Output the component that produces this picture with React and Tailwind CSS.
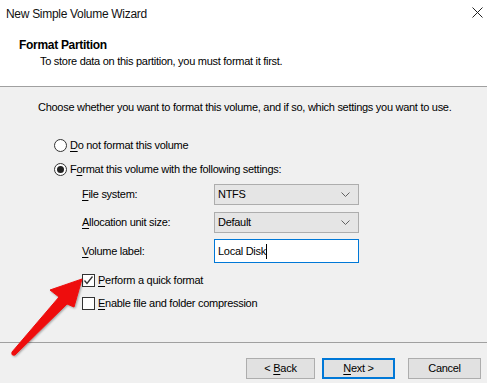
import React from "react";

const U = ({ children }) => <span className="underline underline-offset-2">{children}</span>;

function Chevron() {
  return (
    <svg width="9" height="5" viewBox="0 0 9 5" className="block">
      <path d="M0.5 0.5 L4.5 4.5 L8.5 0.5" fill="none" stroke="#606060" strokeWidth="1" />
    </svg>
  );
}

function Combo({ value }) {
  return (
    <div className="w-[145px] h-[21px] bg-[#e5e5e5] border border-[#adadad] flex items-center justify-between pl-[3px] pr-[8px] box-border">
      <span>{value}</span>
      <Chevron />
    </div>
  );
}

export default function App() {
  return (
    <div
      className="relative w-[487px] h-[383px] bg-[#f0f0f0] overflow-hidden text-[11px] tracking-[-0.28px] text-black flex flex-col"
      style={{ fontFamily: '"Liberation Sans", Arial, sans-serif' }}
    >
      {/* header */}
      <div className="h-[87px] bg-white border-b border-[#a0a0a0] box-border flex flex-col shrink-0">
        <div className="h-[27px] flex items-center justify-between pl-[6px] pr-[4px]">
          <span className="text-[12px] tracking-[-0.3px] leading-none text-[#111]">New Simple Volume Wizard</span>
          <svg width="11" height="11" viewBox="0 0 11 11" className="mt-[-2px]">
            <path d="M0.5 0.5 L10.5 10.5 M10.5 0.5 L0.5 10.5" stroke="#222" strokeWidth="1" />
          </svg>
        </div>
        <div className="pl-[19px] mt-[10px] font-bold text-[12px] tracking-[-0.3px] leading-[16px]">Format Partition</div>
        <div className="pl-[40px] leading-[16px]">To store data on this partition, you must format it first.</div>
      </div>

      {/* body */}
      <div className="flex-1 flex flex-col pl-[38px]">
        <div className="mt-[12px] leading-[16px] whitespace-nowrap">
          Choose whether you want to format this volume, and if so, which settings you want to use.
        </div>

        <div className="mt-[22px] pl-[16px] flex items-center h-[16px] gap-[3px]">
          <span className="w-[13px] h-[13px] rounded-full border border-[#333] bg-white box-border" />
          <span><U>D</U>o not format this volume</span>
        </div>
        <div className="mt-[8px] pl-[16px] flex items-center h-[16px] gap-[3px]">
          <span className="w-[13px] h-[13px] rounded-full border border-[#333] bg-white box-border flex items-center justify-center">
            <span className="w-[7px] h-[7px] rounded-full bg-[#222]" />
          </span>
          <span>F<U>o</U>rmat this volume with the following settings:</span>
        </div>

        <div className="mt-[7px] pl-[44px] flex flex-col">
          <div className="flex items-center h-[21px]">
            <span className="w-[132px]"><U>F</U>ile system:</span>
            <Combo value="NTFS" />
          </div>
          <div className="flex items-center h-[21px] mt-[7px]">
            <span className="w-[132px]"><U>A</U>llocation unit size:</span>
            <Combo value="Default" />
          </div>
          <div className="flex items-center h-[24px] mt-[6px]">
            <span className="w-[132px]"><U>V</U>olume label:</span>
            <div className="w-[145px] h-[24px] bg-white border border-[#0078d7] box-border flex items-center pl-[3px]">
              <span>Local Disk</span>
              <span className="w-px h-[15px] bg-black" />
            </div>
          </div>

          <div className="mt-[9px] flex items-center h-[16px] gap-[3px]">
            <span className="w-[13px] h-[13px] border border-[#333] bg-white box-border flex items-center justify-center">
              <svg width="11" height="11" viewBox="0 0 11 11">
                <path d="M1.5 5.5 L4 8.5 L9.5 1.5" fill="none" stroke="#333" strokeWidth="1.3" />
              </svg>
            </span>
            <span><U>P</U>erform a quick format</span>
          </div>
          <div className="mt-[7px] flex items-center h-[16px] gap-[3px]">
            <span className="w-[13px] h-[13px] border border-[#333] bg-white box-border" />
            <span><U>E</U>nable file and folder compression</span>
          </div>
        </div>
      </div>

      {/* footer */}
      <div className="h-[41px] border-t border-[#a0a0a0] box-border shrink-0 flex items-start justify-end pr-[6px] pt-[15px] gap-[7px]">
        <button className="w-[69px] h-[21px] bg-[#e1e1e1] border border-[#adadad] box-border flex items-center justify-center leading-none">
          <span>&lt;&nbsp;<U>B</U>ack</span>
        </button>
        <button className="w-[73px] h-[21px] bg-[#e1e1e1] border-2 border-[#0078d7] box-border flex items-center justify-center leading-none">
          <span><U>N</U>ext&nbsp;&gt;</span>
        </button>
        <button className="w-[73px] h-[21px] bg-[#e1e1e1] border border-[#adadad] box-border flex items-center justify-center leading-none ml-[6px]">
          <span>Cancel</span>
        </button>
      </div>

      {/* red arrow overlay */}
      <svg className="absolute left-0 top-0 pointer-events-none" width="487" height="383" viewBox="0 0 487 383">
        <defs>
          <filter id="sh" x="-20%" y="-20%" width="140%" height="140%">
            <feDropShadow dx="1" dy="1" stdDeviation="1" floodColor="#000" floodOpacity="0.35" />
          </filter>
        </defs>
        <path
          d="M82 279 L50 290 L59 297 L12 352 Q11 356 15 355 L67 304 L74 307 Z"
          fill="#ee1010"
          stroke="#ee1010"
          strokeWidth="1"
          strokeLinejoin="round"
          filter="url(#sh)"
        />
      </svg>
    </div>
  );
}
